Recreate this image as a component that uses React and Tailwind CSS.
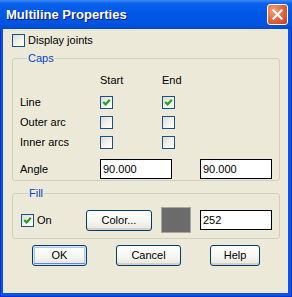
import React from "react";

const font = "font-['Tahoma','Liberation_Sans',sans-serif]";

function Check({ checked }) {
  return (
    <span className="w-[13px] h-[13px] shrink-0 border border-[#1C5180] bg-[linear-gradient(135deg,#DCDCD7,#F4F4F0_60%,#FFFFFF)] flex items-center justify-center">
      {checked && (
        <svg width="9" height="9" viewBox="0 0 9 9">
          <polyline points="1.2,4 3.6,6.4 7.8,1.8" fill="none" stroke="#21A121" strokeWidth="2.2" />
        </svg>
      )}
    </span>
  );
}

function Btn({ children, w, def }) {
  return (
    <button
      type="button"
      className={`${w} h-[21px] rounded-[3px] border border-[#003C74] bg-[linear-gradient(#FFFFFF,#F4F4F0_60%,#E6E5DC)] text-[11px] text-black ${
        def
          ? "shadow-[inset_0_0_0_1px_#CEE7FF,inset_0_-2px_0_#6982EE,inset_0_0_0_2px_#ADC6F2]"
          : "shadow-[inset_0_-2px_0_#D6D0C5]"
      }`}
    >
      {children}
    </button>
  );
}

function Field({ value, w = "w-[72px]" }) {
  return (
    <div className={`${w} h-[20px] border border-black bg-white pl-[2px] flex items-center text-[11px] text-black`}>
      {value}
    </div>
  );
}

function Row({ label, start, end }) {
  return (
    <div className="h-[20px] flex items-center">
      <span className="w-[80px]">{label}</span>
      <span className="w-[62px]">
        <Check checked={start} />
      </span>
      <Check checked={end} />
    </div>
  );
}

export default function App() {
  return (
    <div className={`w-[292px] h-[297px] bg-[#0B53E0] border border-[#0831D9] border-t-0 flex flex-col ${font} text-[11px] leading-[13px] text-black`}>
      {/* title bar */}
      <div className="h-[29px] -mx-[1px] shrink-0 bg-[linear-gradient(#3D8CF5,#0A61EC_12%,#0057E6_45%,#0054E2_85%,#0049CC)] flex items-center justify-between pl-[6px] pr-[4px]">
        <span className="text-white font-bold text-[13px] font-['Liberation_Sans',sans-serif] [text-shadow:1px_1px_0_#0A1883]">
          Multiline Properties
        </span>
        <span className="w-[21px] h-[21px] rounded-[3px] border border-white bg-[radial-gradient(circle_at_30%_30%,#F0A07A,#E0623A_55%,#C2401A)] flex items-center justify-center">
          <svg width="11" height="11" viewBox="0 0 11 11">
            <path d="M1.5 1.5 L9.5 9.5 M9.5 1.5 L1.5 9.5" stroke="#fff" strokeWidth="2.2" strokeLinecap="square" />
          </svg>
        </span>
      </div>

      {/* client */}
      <div className="flex-1 ml-[2px] mr-[3px] mb-[3px] bg-[#ECE9D8] flex flex-col pl-[9px]">
        <div className="mt-[5px] flex items-center gap-[3px]">
          <Check />
          <span>Display joints</span>
        </div>

        <fieldset className="mt-[5px] w-[268px] border border-[#D0D0BF] rounded-[3px] pl-[7px] pb-[1px]">
          <legend className="ml-[7px] px-[1px] text-[#0046D5]">Caps</legend>
          <div className="flex pt-[9px] h-[22px]">
            <span className="w-[80px]" />
            <span className="w-[62px]">Start</span>
            <span>End</span>
          </div>
          <div className="mt-[5px]">
            <Row label="Line" start end />
            <Row label="Outer arc" />
            <Row label="Inner arcs" />
          </div>
          <div className="mt-[7px] flex items-center">
            <span className="w-[80px]">Angle</span>
            <Field value="90.000" />
            <span className="w-[28px]" />
            <Field value="90.000" />
          </div>
        </fieldset>

        <fieldset className="mt-[6px] w-[268px] border border-[#D0D0BF] rounded-[3px] pl-[8px] pt-[7px] pb-[5px]">
          <legend className="ml-[7px] px-[1px] text-[#0046D5]">Fill</legend>
          <div className="flex items-center h-[26px]">
            <Check checked />
            <span className="ml-[3px] w-[49px]">On</span>
            <Btn w="w-[66px]">Color...</Btn>
            <span className="ml-[9px] w-[30px] h-[26px] border border-[#A7A69E] bg-[#6B6B6B]" />
            <span className="w-[9px]" />
            <Field value="252" />
          </div>
        </fieldset>

        <div className="mt-[6px] flex items-center">
          <span className="w-[20px]" />
          <Btn w="w-[55px]" def>
            OK
          </Btn>
          <span className="w-[29px]" />
          <Btn w="w-[65px]">Cancel</Btn>
          <span className="w-[29px]" />
          <Btn w="w-[50px]">Help</Btn>
        </div>
      </div>
    </div>
  );
}
